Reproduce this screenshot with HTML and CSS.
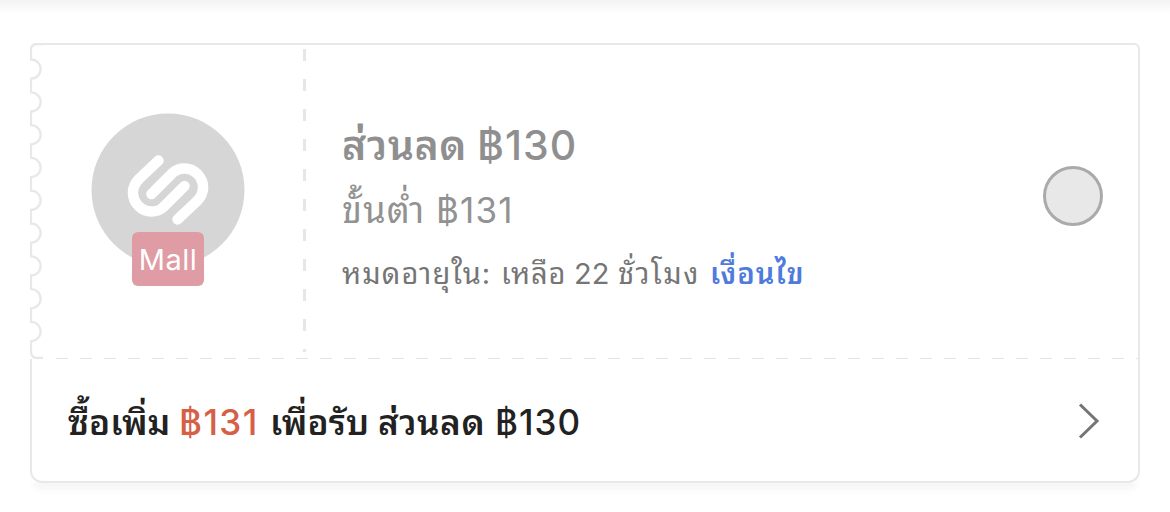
FILE: index.html
```html
<!DOCTYPE html>
<html lang="th">
  <head>
    <meta charset="UTF-8" />
    <meta name="viewport" content="width=device-width, initial-scale=1.0" />
    <title>Voucher</title>
    <link rel="stylesheet" href="styles.css">
  </head>
  <body>
    <div class="voucher">
      <div class="voucher-main">
        <svg class="ticket-edge" width="14" height="316" viewBox="0 0 14 316">
          <path d="M14 1H7Q1 1 1 7V16.5a9.6 9.6 0 0 1 0 19.2V49.3a9.6 9.6 0 0 1 0 19.2V82.1a9.6 9.6 0 0 1 0 19.2V114.9a9.6 9.6 0 0 1 0 19.2V147.7a9.6 9.6 0 0 1 0 19.2V180.5a9.6 9.6 0 0 1 0 19.2V213.3a9.6 9.6 0 0 1 0 19.2V246.1a9.6 9.6 0 0 1 0 19.2V278.9a9.6 9.6 0 0 1 0 19.2V308Q1 315 7 315H13" />
        </svg>
        <div class="shop">
          <svg class="shop-logo" width="154" height="154" viewBox="91 113 154 154">
            <circle cx="168" cy="190" r="76.5" />
            <path d="M158.5 160.5L139 179C131 187 131 198 138.500 206C146 213.500 157 213 163.500 207L184.500 186" />
            <path d="M177.500 219.500L197 201C205 193 205 182 197.500 174C190 166.500 179 167 172.500 173L151.500 194" />
          </svg>
          <span class="mall">Mall</span>
        </div>
        <div class="details">
          <div class="title"><span class="title-th">ส่วนลด</span><span class="title-num">฿130</span></div>
          <div class="minimum"><span class="minimum-th">ขั้นต่ำ</span><span class="minimum-num">฿131</span></div>
          <div class="expiry"><span class="expires">หมดอายุใน:</span><span class="left">เหลือ</span><span class="hours">22</span><span class="unit">ชั่วโมง</span><a class="terms">เงื่อนไข</a></div>
        </div>
        <div class="select"><span class="radio"></span></div>
      </div>
      <div class="voucher-more">
        <div class="more-text"><span class="buy">ซื้อเพิ่ม</span><span class="amount">฿131</span><span class="get">เพื่อรับ</span><span class="off">ส่วนลด</span><span class="value">฿130</span></div>
        <svg class="arrow" width="22" height="38" viewBox="0 0 22 38">
          <path d="M2 2.500L19 19L2 35.500" />
        </svg>
      </div>
    </div>
  </body>
</html>
```
FILE: styles.css
```css
* {
  box-sizing: border-box;
}

body {
  margin: 0;
  height: 512px;
  padding: 43px 30px 0;
  overflow: hidden;
  background: linear-gradient(#f3f3f3, #fff 14px);
  font-family: Inter, "Noto Sans Thai Looped", "Loma", "Garuda", "Waree", "Liberation Sans", sans-serif;
}

.voucher {
  width: 1110px;
  height: 440px;
  border-radius: 4px 5px 8px 8px;
  box-shadow: 0 11px 6px -4px #f7f7f7;
}

.voucher-main {
  display: flex;
  height: 316px;
  background:
    repeating-linear-gradient(90deg, #e4e4e4 0 12px, transparent 12px 24px) 26px 315px / 1082px 1px no-repeat,
    #fff;
  border-right: 2px solid #e8e8e8;
  border-top: 2px solid #e8e8e8;
  border-top-left-radius: 7px;
  border-top-right-radius: 6px;
  background-origin: border-box;
}

.ticket-edge {
  flex: none;
  margin-top: -2px;
}

.ticket-edge path {
  fill: none;
  stroke: #e8e8e8;
  stroke-width: 2.3;
}

.shop {
  display: flex;
  flex-direction: column;
  align-items: center;
  width: 262px;
  padding: 68px 0 0;
  margin-right: 36px;
  background: repeating-linear-gradient(#e6e6e6 0 12px, transparent 12px 30px) 259px 4px / 3px 303px no-repeat;
}

.shop-logo {
  flex: none;
  margin-left: -14px;
}

.shop-logo circle {
  fill: #d6d6d6;
}

.shop-logo path {
  fill: none;
  stroke: #fff;
  stroke-width: 10.5;
  stroke-linecap: round;
}

.mall {
  width: 72px;
  height: 54px;
  margin: -35px 0 0 -14px;
  border-radius: 6px;
  background: #e09ca4;
  color: #fff;
  font-size: 29px;
  line-height: 55px;
  text-align: center;
  letter-spacing: 0.5px;
  z-index: 1;
}

.details {
  width: 500px;
  padding-top: 67px;
  white-space: nowrap;
}

.title,
.minimum,
.expiry,
.more-text {
  display: flex;
  align-items: baseline;
}

.title {
  height: 66px;
  color: #8f8f8f;
  font-size: 41px;
  line-height: 66px;
  font-weight: 500;
}

.title-th {
  width: 135px;
  font-weight: 600;
  letter-spacing: 0.5px;
}

.title-num {
  letter-spacing: 1px;
}

.minimum {
  height: 64px;
  color: #929292;
  font-size: 35px;
  line-height: 64px;
}

.minimum-th {
  width: 94px;
  font-size: 36px;
  letter-spacing: 1.2px;
}

.minimum-num {
  letter-spacing: 1.2px;
}

.expiry {
  height: 60px;
  color: #757575;
  font-size: 29px;
  line-height: 63px;
}

.expires {
  width: 159px;
  letter-spacing: 1.1px;
}

.left {
  width: 73px;
  letter-spacing: 0.8px;
}

.hours {
  width: 44px;
}

.unit {
  width: 92px;
  letter-spacing: 1.5px;
}

.terms {
  color: #4f7bdc;
  font-weight: 600;
  letter-spacing: 1px;
}

.select {
  margin: 121px 35px 0 auto;
}

.radio {
  display: block;
  width: 60px;
  height: 60px;
  border: 3px solid #aaa;
  border-radius: 50%;
  background: #e8e8e8;
}

.voucher-more {
  display: flex;
  align-items: center;
  justify-content: space-between;
  height: 124px;
  padding: 2px 38px 0 36px;
  border: 2px solid #e8e8e8;
  border-top: 0;
  border-radius: 0 0 12px 12px;
  background: #fff;
}

.more-text {
  padding-top: 2px;
  color: #222;
  font-size: 35px;
  line-height: 60px;
  font-weight: 500;
  white-space: nowrap;
}

.buy,
.get,
.off {
  font-weight: 600;
}

.buy {
  width: 111px;
  letter-spacing: 0.1px;
}

.amount {
  width: 91px;
  color: #d66045;
  letter-spacing: 1.4px;
}

.get {
  width: 108px;
  letter-spacing: 0.1px;
}

.off {
  width: 117px;
  letter-spacing: 0.5px;
}

.value {
  letter-spacing: 1px;
}

.arrow path {
  fill: none;
  stroke: #757575;
  stroke-width: 3;
}
```
